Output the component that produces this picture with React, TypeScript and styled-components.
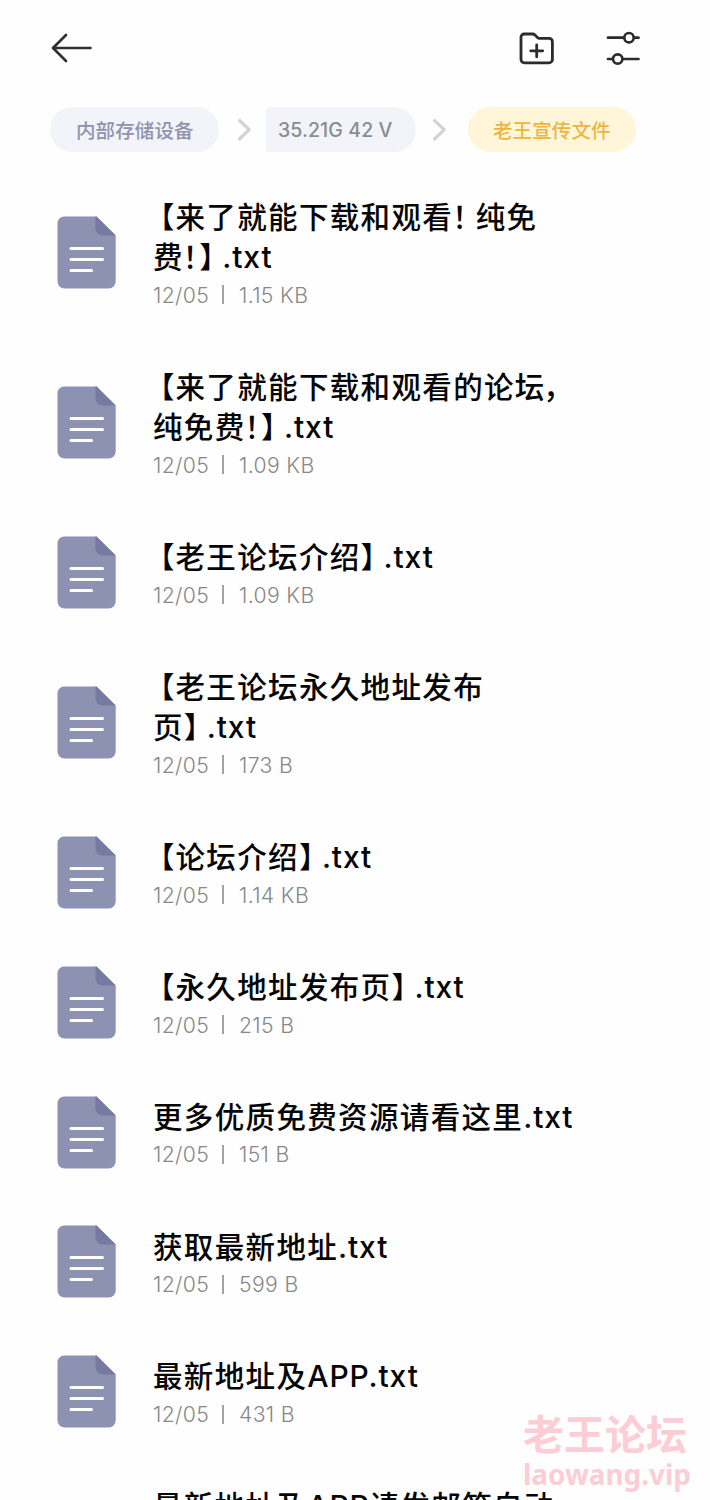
import React from 'react';
import styled, { createGlobalStyle } from 'styled-components';

const latin = '"Inter", "Noto Sans CJK SC", sans-serif';
const cjk = '"Noto Sans CJK SC", sans-serif';

const GlobalStyle = createGlobalStyle`
  * { box-sizing: border-box; }
  body { margin: 0; background: #fff; font-family: ${cjk}; }
`;

const Screen = styled.div`
  position: relative;
  width: 710px;
  height: 1500px;
  overflow: hidden;
  background: #fefefe;
`;

const Toolbar = styled.header`
  display: flex;
  align-items: center;
  height: 96px;
  padding: 0 68px 0 50px;
`;

const Actions = styled.div`
  display: flex;
  gap: 48px;
  margin-left: auto;
`;

const Breadcrumbs = styled.nav`
  display: flex;
  align-items: center;
  height: 45px;
  margin: 11px 0 0 50px;
`;

const Crumb = styled.span<{ $width: number; $tone?: 'plain' | 'active'; $clipped?: boolean }>`
  display: flex;
  align-items: center;
  width: ${(p) => p.$width}px;
  height: 45px;
  padding: 0 0 ${(p) => (p.$clipped ? 0 : 1)}px ${(p) => (p.$clipped ? 12 : p.$tone === 'active' ? 25 : 26)}px;
  border-radius: ${(p) => (p.$clipped ? '3px 22.5px 22.5px 3px' : '22.5px')};
  background: ${(p) => (p.$tone === 'active' ? '#fff5d9' : '#f3f3fa')};
  color: ${(p) => (p.$tone === 'active' ? '#ecb53f' : p.$clipped ? '#8a8b93' : '#9192ad')};
  font-family: ${(p) => (p.$clipped ? latin : cjk)};
  font-size: 19.5px;
  font-weight: 500;
  letter-spacing: 0.1px;
  white-space: nowrap;
`;

const Separator = styled.svg<{ $left: number; $right: number }>`
  flex: none;
  margin: 0 ${(p) => p.$right}px 0 ${(p) => p.$left}px;
`;

const FileList = styled.main`
  display: flex;
  flex-direction: column;
  padding-top: 15.2px;
`;

const Row = styled.article`
  display: flex;
  align-items: center;
  flex: none;
  padding-left: 57px;
`;

const Details = styled.div`
  padding: 27.6px 0 23.4px;
  margin-left: 37px;
`;

const TitleLine = styled.div`
  height: 40.35px;
  line-height: 40.35px;
  font-family: ${cjk};
  font-size: 29.5px;
  font-weight: 500;
  letter-spacing: 1.35px;
  color: #060606;
  white-space: pre;
`;

const Latin = styled.span`
  font-family: ${latin};
  font-size: 30px;
  line-height: 1;
  letter-spacing: 0.85px;
`;

const Punct = styled.span<{ $width: number; $shift: number }>`
  display: inline-block;
  width: ${(p) => p.$width}px;
  text-indent: ${(p) => p.$shift}px;
  letter-spacing: 0;
`;

const Meta = styled.div`
  display: flex;
  align-items: center;
  height: 38.5px;
  font-family: ${latin};
  font-size: 21.2px;
  font-weight: 300;
  letter-spacing: 0.35px;
  color: #888;
  white-space: pre;
`;

const DateText = styled.span`
  width: 69px;
`;

const Divider = styled.span`
  width: 2px;
  height: 19px;
  margin-right: 15px;
  background: #a3a3a3;
`;

const Watermark = styled.aside`
  position: absolute;
  left: 523px;
  top: 1407px;
  color: #fccdd5;
  font-weight: 700;
  white-space: nowrap;
`;

const WatermarkName = styled.div`
  font-size: 41px;
  line-height: 50px;
`;

const WatermarkSite = styled.div`
  font-family: "Noto Sans", sans-serif;
  font-size: 27.9px;
  line-height: 34px;
`;

const BackIcon = () => (
  <svg width="44" height="32" viewBox="0 0 44 32" fill="none" stroke="#303030" strokeWidth="2.7" strokeLinecap="round" strokeLinejoin="round">
    <path d="M40.5 16H3M16 3L3 16l13 13" />
  </svg>
);

const NewFolderIcon = () => (
  <svg width="38" height="36" viewBox="0 0 38 36" fill="none" stroke="#2b2b2b" strokeWidth="2.8" strokeLinecap="round" strokeLinejoin="round">
    <path d="M6 4h8.500c1 0 1.800.3 2.500 1l2.400 2.400c.6.6 1.400.9 2.200.9H31a3.400 3.400 0 0 1 3.400 3.400v17.800a3.300 3.300 0 0 1-3.300 3.300H6.300A3.300 3.300 0 0 1 3 29.500V7a3 3 0 0 1 3-3z" />
    <path d="M18.700 14.800v12M12.700 20.800h12" />
  </svg>
);

const FilterIcon = () => (
  <svg width="38" height="36" viewBox="0 0 38 36" fill="none" stroke="#2b2b2b" strokeWidth="2.7" strokeLinecap="round">
    <path d="M4 7.700h16M30.500 7.700h4M4 29h4M19 29h15.500" />
    <circle cx="25" cy="7.700" r="4.700" />
    <circle cx="13.700" cy="29" r="4.700" />
  </svg>
);

const Chevron = ({ left, right }: { left: number; right: number }) => (
  <Separator $left={left} $right={right} width="15" height="24" viewBox="0 0 15 24" fill="none" stroke="#d3d3d4" strokeWidth="3.2" strokeLinecap="round" strokeLinejoin="round">
    <path d="M2.500 2.500L12.200 11.700L2.500 21" />
  </Separator>
);

const FileIcon = () => (
  <svg width="59" height="73" viewBox="0 0 59 73" fill="none">
    <path d="M7 .5H39.500L58.700 19.500V65.500a7 7 0 0 1-7 7H7.500a7 7 0 0 1-7-7V7A6.500 6.500 0 0 1 7 .5z" fill="#8d92b3" />
    <path d="M38.500 .5H39.500L58.700 19.500H45.500a7 7 0 0 1-7-7V.5z" fill="#767aa0" />
    <path d="M14 32.500H45.500M14 43.500H45.500M14 54.500H34.500" stroke="#fff" strokeWidth="3" strokeLinecap="round" />
  </svg>
);

const Open = () => <Punct $width={22.5} $shift={-8}>【</Punct>;
const Close = () => <Punct $width={23} $shift={0}>】</Punct>;
const Ext = () => <Latin>.txt</Latin>;

type FileEntry = { lines: React.ReactNode[]; size?: string };

const files: FileEntry[] = [
  {
    lines: [
      <><Open />来了就能下载和观看<Punct $width={22.5} $shift={-1}>！</Punct>纯免</>,
      <>费<Punct $width={15.5} $shift={-1}>！</Punct><Close /><Ext /></>,
    ],
    size: '1.15 KB',
  },
  {
    lines: [
      <><Open />来了就能下载和观看的论坛<Punct $width={22} $shift={-2.5}>，</Punct></>,
      <>纯免费<Punct $width={15.5} $shift={-1}>！</Punct><Close /><Ext /></>,
    ],
    size: '1.09 KB',
  },
  { lines: [<><Open />老王论坛介绍<Close /><Ext /></>], size: '1.09 KB' },
  { lines: [<><Open />老王论坛永久地址发布</>, <>页<Close /><Ext /></>], size: '173 B' },
  { lines: [<><Open />论坛介绍<Close /><Ext /></>], size: '1.14 KB' },
  { lines: [<><Open />永久地址发布页<Close /><Ext /></>], size: '215 B' },
  { lines: [<>更多优质免费资源请看这里<Ext /></>], size: '151 B' },
  { lines: [<>获取最新地址<Ext /></>], size: '599 B' },
  { lines: [<>最新地址及<Latin>APP.txt</Latin></>], size: '431 B' },
  { lines: [<>最新地址及<Latin>APP</Latin>请发邮箱自动</>, null] },
];

export default function App() {
  return (
    <Screen>
      <GlobalStyle />
      <Toolbar>
        <BackIcon />
        <Actions>
          <NewFolderIcon />
          <FilterIcon />
        </Actions>
      </Toolbar>
      <Breadcrumbs>
        <Crumb $width={169}>内部存储设备</Crumb>
        <Chevron left={18} right={14} />
        <Crumb $width={150} $clipped>35.21G 42 V</Crumb>
        <Chevron left={16} right={21} />
        <Crumb $width={168} $tone="active">老王宣传文件</Crumb>
      </Breadcrumbs>
      <FileList>
        {files.map((file, i) => (
          <Row key={i}>
            <FileIcon />
            <Details>
              {file.lines.map((line, j) => (
                <TitleLine key={j}>{line}</TitleLine>
              ))}
              <Meta>
                {file.size && (
                  <>
                    <DateText>12/05</DateText>
                    <Divider />
                    <span>{file.size}</span>
                  </>
                )}
              </Meta>
            </Details>
          </Row>
        ))}
      </FileList>
      <Watermark>
        <WatermarkName>老王论坛</WatermarkName>
        <WatermarkSite>laowang.vip</WatermarkSite>
      </Watermark>
    </Screen>
  );
}
